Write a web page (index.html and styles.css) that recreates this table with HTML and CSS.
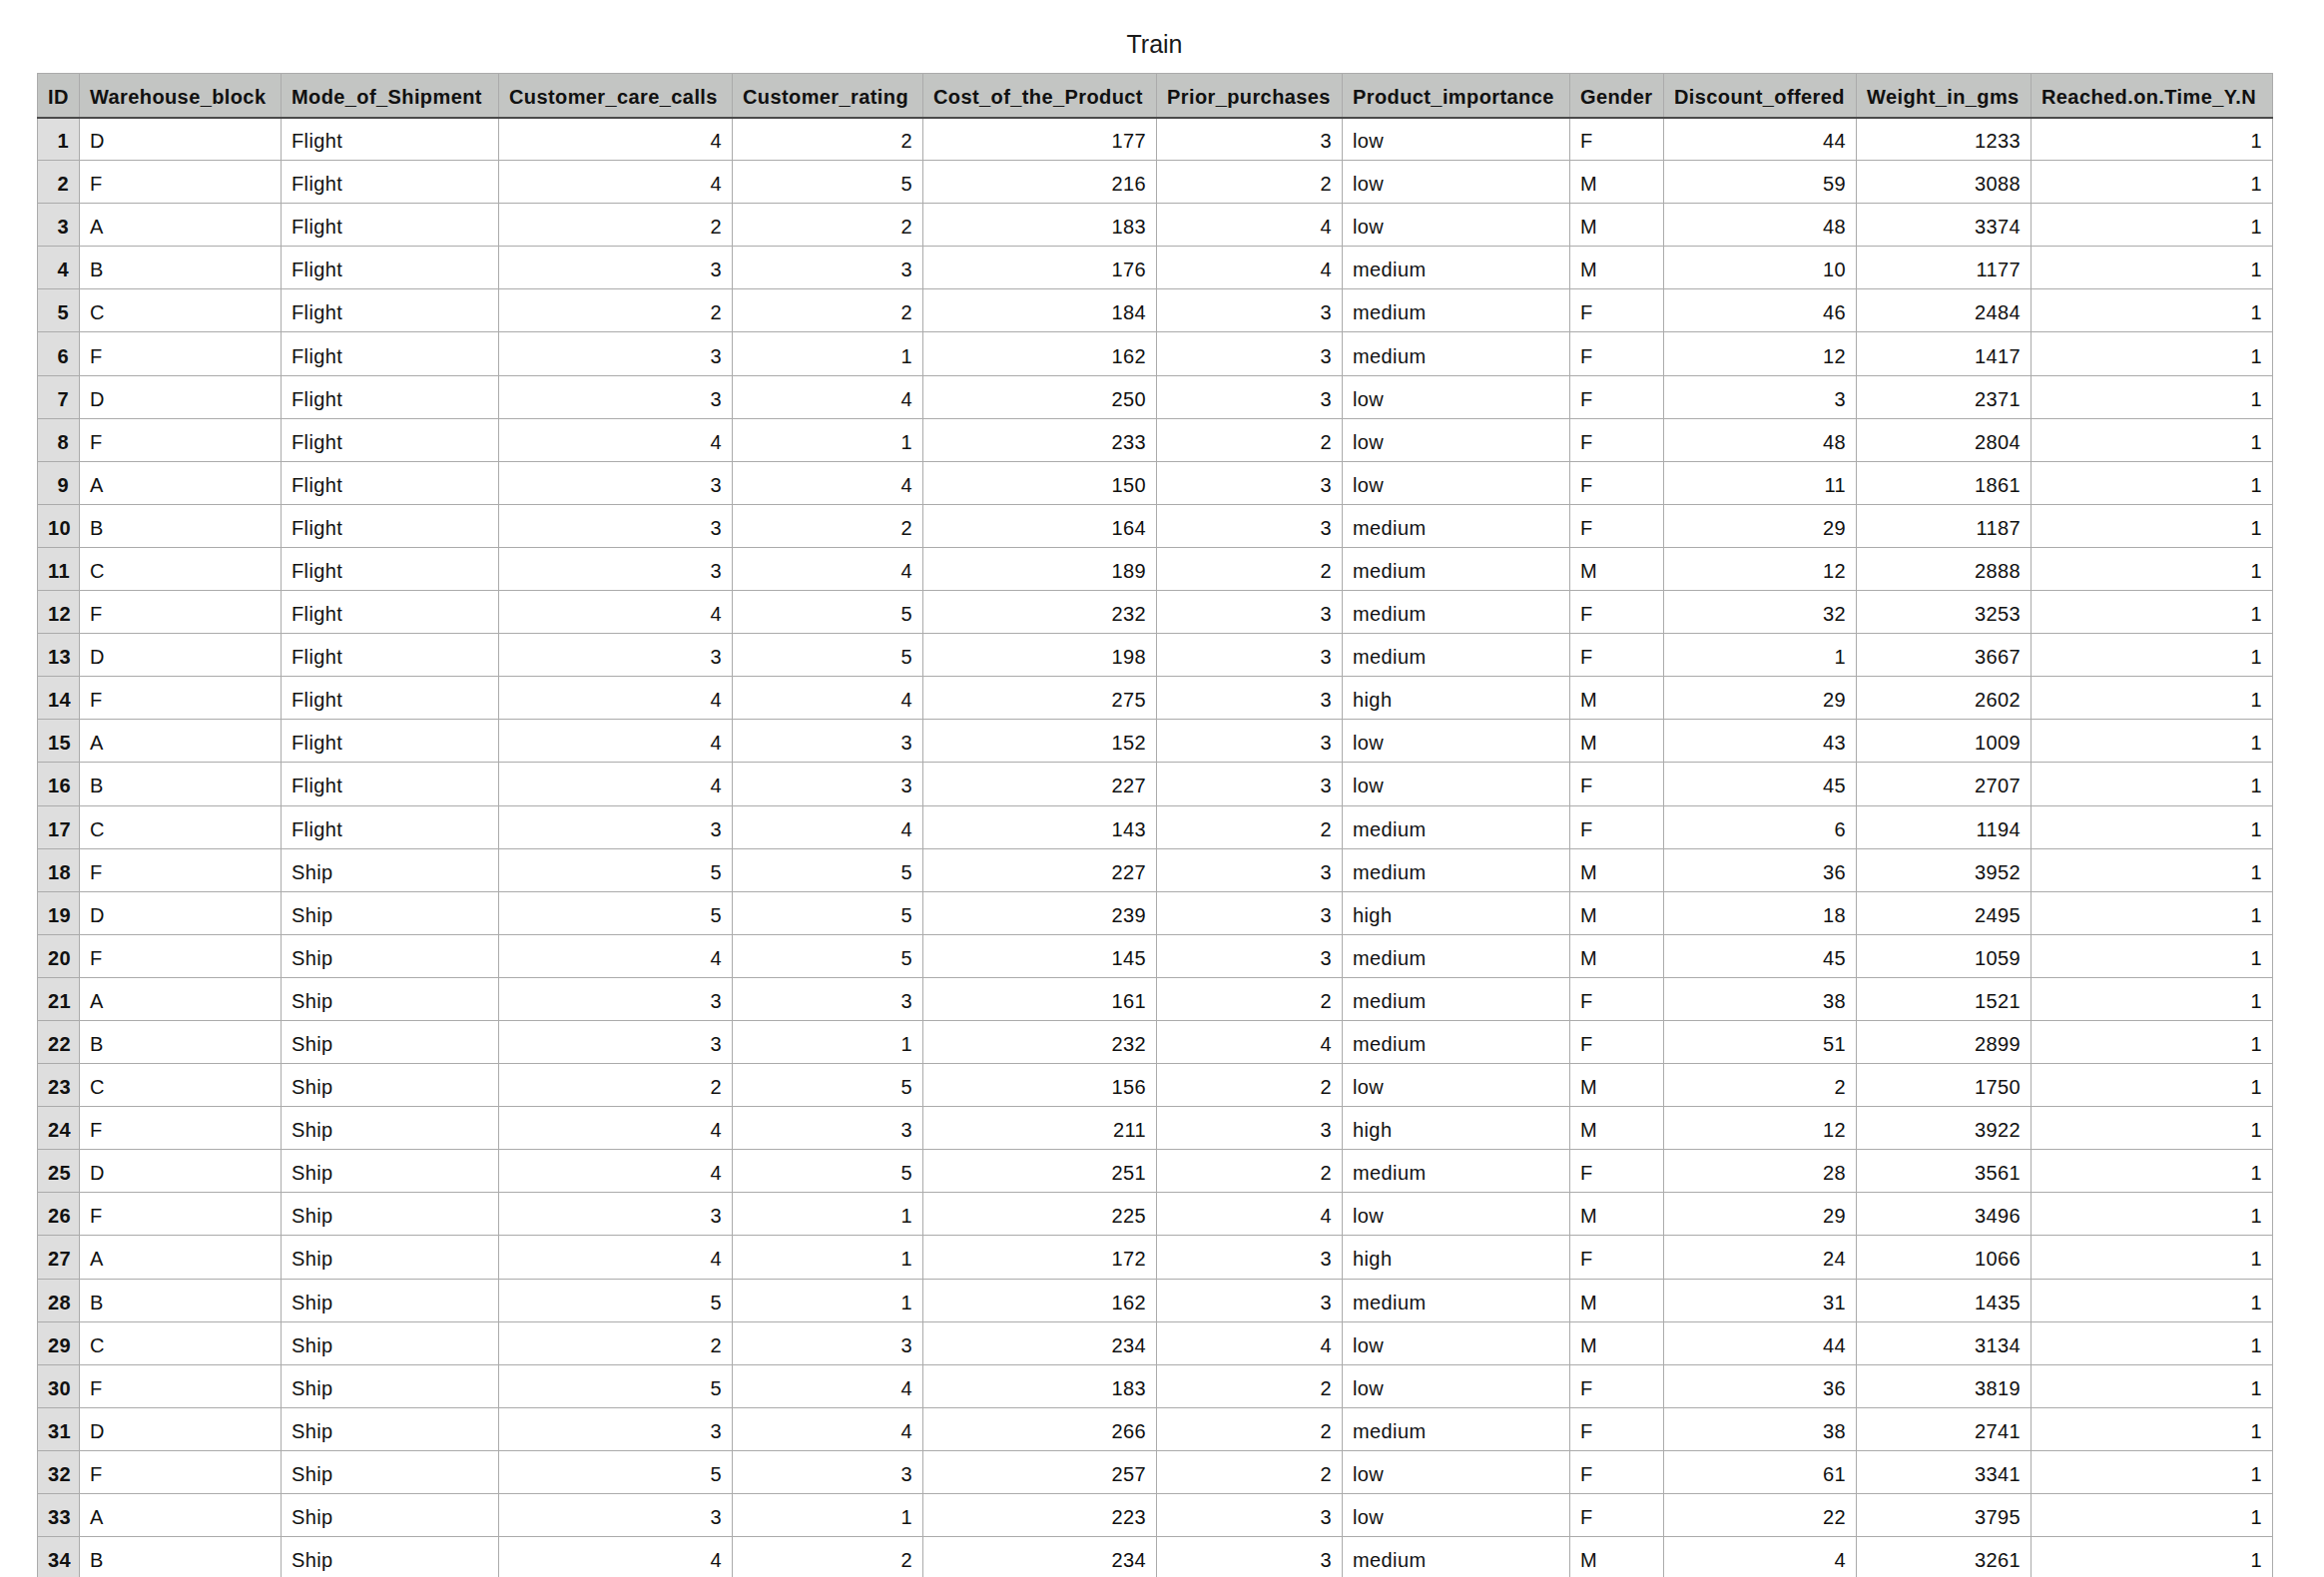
FILE: index.html
```html
<!DOCTYPE html>
<html>
<head>
<meta charset="utf-8">
<title>Train</title>
<link rel="stylesheet" href="styles.css">
</head>
<body>
<div class="sheet">
  <div class="title">Train</div>
  <table class="grid">
    <colgroup>
      <col class="c-id"><col class="c-wh"><col class="c-mode"><col class="c-ccc"><col class="c-cr"><col class="c-cost"><col class="c-prior"><col class="c-pi"><col class="c-gender"><col class="c-disc"><col class="c-weight"><col class="c-reach">
    </colgroup>
    <thead>
      <tr>
        <th>ID</th><th>Warehouse_block</th><th>Mode_of_Shipment</th><th>Customer_care_calls</th><th>Customer_rating</th><th>Cost_of_the_Product</th><th>Prior_purchases</th><th>Product_importance</th><th>Gender</th><th>Discount_offered</th><th>Weight_in_gms</th><th>Reached.on.Time_Y.N</th>
      </tr>
    </thead>
    <tbody>
      <tr><td class="id">1</td><td>D</td><td>Flight</td><td class="n">4</td><td class="n">2</td><td class="n">177</td><td class="n">3</td><td>low</td><td>F</td><td class="n">44</td><td class="n">1233</td><td class="n">1</td></tr>
      <tr><td class="id">2</td><td>F</td><td>Flight</td><td class="n">4</td><td class="n">5</td><td class="n">216</td><td class="n">2</td><td>low</td><td>M</td><td class="n">59</td><td class="n">3088</td><td class="n">1</td></tr>
      <tr><td class="id">3</td><td>A</td><td>Flight</td><td class="n">2</td><td class="n">2</td><td class="n">183</td><td class="n">4</td><td>low</td><td>M</td><td class="n">48</td><td class="n">3374</td><td class="n">1</td></tr>
      <tr><td class="id">4</td><td>B</td><td>Flight</td><td class="n">3</td><td class="n">3</td><td class="n">176</td><td class="n">4</td><td>medium</td><td>M</td><td class="n">10</td><td class="n">1177</td><td class="n">1</td></tr>
      <tr><td class="id">5</td><td>C</td><td>Flight</td><td class="n">2</td><td class="n">2</td><td class="n">184</td><td class="n">3</td><td>medium</td><td>F</td><td class="n">46</td><td class="n">2484</td><td class="n">1</td></tr>
      <tr><td class="id">6</td><td>F</td><td>Flight</td><td class="n">3</td><td class="n">1</td><td class="n">162</td><td class="n">3</td><td>medium</td><td>F</td><td class="n">12</td><td class="n">1417</td><td class="n">1</td></tr>
      <tr><td class="id">7</td><td>D</td><td>Flight</td><td class="n">3</td><td class="n">4</td><td class="n">250</td><td class="n">3</td><td>low</td><td>F</td><td class="n">3</td><td class="n">2371</td><td class="n">1</td></tr>
      <tr><td class="id">8</td><td>F</td><td>Flight</td><td class="n">4</td><td class="n">1</td><td class="n">233</td><td class="n">2</td><td>low</td><td>F</td><td class="n">48</td><td class="n">2804</td><td class="n">1</td></tr>
      <tr><td class="id">9</td><td>A</td><td>Flight</td><td class="n">3</td><td class="n">4</td><td class="n">150</td><td class="n">3</td><td>low</td><td>F</td><td class="n">11</td><td class="n">1861</td><td class="n">1</td></tr>
      <tr><td class="id">10</td><td>B</td><td>Flight</td><td class="n">3</td><td class="n">2</td><td class="n">164</td><td class="n">3</td><td>medium</td><td>F</td><td class="n">29</td><td class="n">1187</td><td class="n">1</td></tr>
      <tr><td class="id">11</td><td>C</td><td>Flight</td><td class="n">3</td><td class="n">4</td><td class="n">189</td><td class="n">2</td><td>medium</td><td>M</td><td class="n">12</td><td class="n">2888</td><td class="n">1</td></tr>
      <tr><td class="id">12</td><td>F</td><td>Flight</td><td class="n">4</td><td class="n">5</td><td class="n">232</td><td class="n">3</td><td>medium</td><td>F</td><td class="n">32</td><td class="n">3253</td><td class="n">1</td></tr>
      <tr><td class="id">13</td><td>D</td><td>Flight</td><td class="n">3</td><td class="n">5</td><td class="n">198</td><td class="n">3</td><td>medium</td><td>F</td><td class="n">1</td><td class="n">3667</td><td class="n">1</td></tr>
      <tr><td class="id">14</td><td>F</td><td>Flight</td><td class="n">4</td><td class="n">4</td><td class="n">275</td><td class="n">3</td><td>high</td><td>M</td><td class="n">29</td><td class="n">2602</td><td class="n">1</td></tr>
      <tr><td class="id">15</td><td>A</td><td>Flight</td><td class="n">4</td><td class="n">3</td><td class="n">152</td><td class="n">3</td><td>low</td><td>M</td><td class="n">43</td><td class="n">1009</td><td class="n">1</td></tr>
      <tr><td class="id">16</td><td>B</td><td>Flight</td><td class="n">4</td><td class="n">3</td><td class="n">227</td><td class="n">3</td><td>low</td><td>F</td><td class="n">45</td><td class="n">2707</td><td class="n">1</td></tr>
      <tr><td class="id">17</td><td>C</td><td>Flight</td><td class="n">3</td><td class="n">4</td><td class="n">143</td><td class="n">2</td><td>medium</td><td>F</td><td class="n">6</td><td class="n">1194</td><td class="n">1</td></tr>
      <tr><td class="id">18</td><td>F</td><td>Ship</td><td class="n">5</td><td class="n">5</td><td class="n">227</td><td class="n">3</td><td>medium</td><td>M</td><td class="n">36</td><td class="n">3952</td><td class="n">1</td></tr>
      <tr><td class="id">19</td><td>D</td><td>Ship</td><td class="n">5</td><td class="n">5</td><td class="n">239</td><td class="n">3</td><td>high</td><td>M</td><td class="n">18</td><td class="n">2495</td><td class="n">1</td></tr>
      <tr><td class="id">20</td><td>F</td><td>Ship</td><td class="n">4</td><td class="n">5</td><td class="n">145</td><td class="n">3</td><td>medium</td><td>M</td><td class="n">45</td><td class="n">1059</td><td class="n">1</td></tr>
      <tr><td class="id">21</td><td>A</td><td>Ship</td><td class="n">3</td><td class="n">3</td><td class="n">161</td><td class="n">2</td><td>medium</td><td>F</td><td class="n">38</td><td class="n">1521</td><td class="n">1</td></tr>
      <tr><td class="id">22</td><td>B</td><td>Ship</td><td class="n">3</td><td class="n">1</td><td class="n">232</td><td class="n">4</td><td>medium</td><td>F</td><td class="n">51</td><td class="n">2899</td><td class="n">1</td></tr>
      <tr><td class="id">23</td><td>C</td><td>Ship</td><td class="n">2</td><td class="n">5</td><td class="n">156</td><td class="n">2</td><td>low</td><td>M</td><td class="n">2</td><td class="n">1750</td><td class="n">1</td></tr>
      <tr><td class="id">24</td><td>F</td><td>Ship</td><td class="n">4</td><td class="n">3</td><td class="n">211</td><td class="n">3</td><td>high</td><td>M</td><td class="n">12</td><td class="n">3922</td><td class="n">1</td></tr>
      <tr><td class="id">25</td><td>D</td><td>Ship</td><td class="n">4</td><td class="n">5</td><td class="n">251</td><td class="n">2</td><td>medium</td><td>F</td><td class="n">28</td><td class="n">3561</td><td class="n">1</td></tr>
      <tr><td class="id">26</td><td>F</td><td>Ship</td><td class="n">3</td><td class="n">1</td><td class="n">225</td><td class="n">4</td><td>low</td><td>M</td><td class="n">29</td><td class="n">3496</td><td class="n">1</td></tr>
      <tr><td class="id">27</td><td>A</td><td>Ship</td><td class="n">4</td><td class="n">1</td><td class="n">172</td><td class="n">3</td><td>high</td><td>F</td><td class="n">24</td><td class="n">1066</td><td class="n">1</td></tr>
      <tr><td class="id">28</td><td>B</td><td>Ship</td><td class="n">5</td><td class="n">1</td><td class="n">162</td><td class="n">3</td><td>medium</td><td>M</td><td class="n">31</td><td class="n">1435</td><td class="n">1</td></tr>
      <tr><td class="id">29</td><td>C</td><td>Ship</td><td class="n">2</td><td class="n">3</td><td class="n">234</td><td class="n">4</td><td>low</td><td>M</td><td class="n">44</td><td class="n">3134</td><td class="n">1</td></tr>
      <tr><td class="id">30</td><td>F</td><td>Ship</td><td class="n">5</td><td class="n">4</td><td class="n">183</td><td class="n">2</td><td>low</td><td>F</td><td class="n">36</td><td class="n">3819</td><td class="n">1</td></tr>
      <tr><td class="id">31</td><td>D</td><td>Ship</td><td class="n">3</td><td class="n">4</td><td class="n">266</td><td class="n">2</td><td>medium</td><td>F</td><td class="n">38</td><td class="n">2741</td><td class="n">1</td></tr>
      <tr><td class="id">32</td><td>F</td><td>Ship</td><td class="n">5</td><td class="n">3</td><td class="n">257</td><td class="n">2</td><td>low</td><td>F</td><td class="n">61</td><td class="n">3341</td><td class="n">1</td></tr>
      <tr><td class="id">33</td><td>A</td><td>Ship</td><td class="n">3</td><td class="n">1</td><td class="n">223</td><td class="n">3</td><td>low</td><td>F</td><td class="n">22</td><td class="n">3795</td><td class="n">1</td></tr>
      <tr><td class="id">34</td><td>B</td><td>Ship</td><td class="n">4</td><td class="n">2</td><td class="n">234</td><td class="n">3</td><td>medium</td><td>M</td><td class="n">4</td><td class="n">3261</td><td class="n">1</td></tr>
    </tbody>
  </table>
</div>
</body>
</html>
```

FILE: styles.css
```css
html, body {
  margin: 0;
  padding: 0;
  overflow: hidden;
  background: #ffffff;
}

body {
  width: 2328px;
  height: 1580px;
  font-family: "Liberation Sans", Arial, sans-serif;
  color: #111111;
}

.sheet {
  padding-left: 37px;
}

.title {
  width: 2239px;
  height: 73px;
  box-sizing: border-box;
  padding-top: 32px;
  font-size: 25px;
  line-height: 25px;
  text-align: center;
  color: #1a1a1a;
}

.grid {
  border-collapse: collapse;
  table-layout: fixed;
  width: 2239px;
  font-size: 20px;
  letter-spacing: 0.4px;
}

.c-id { width: 42px; }
.c-wh { width: 202px; }
.c-mode { width: 218px; }
.c-ccc { width: 234px; }
.c-cr { width: 191px; }
.c-cost { width: 234px; }
.c-prior { width: 186px; }
.c-pi { width: 228px; }
.c-gender { width: 94px; }
.c-disc { width: 193px; }
.c-weight { width: 175px; }
.c-reach { width: 242px; }

.grid th,
.grid td {
  border: 1px solid #ababab;
  padding: 5px 10px 0 10px;
  white-space: nowrap;
  overflow: hidden;
  vertical-align: middle;
  line-height: 23px;
}

.grid thead tr {
  height: 44px;
}

.grid th {
  background: #c3c5c3;
  font-weight: bold;
  text-align: left;
  color: #111111;
  border-bottom: 2px solid #4a4a4a;
}

.grid tbody tr {
  height: 43.1px;
}

.grid td.n {
  text-align: right;
}

.grid td.id {
  background: #dedede;
  font-weight: bold;
  text-align: right;
}
```
